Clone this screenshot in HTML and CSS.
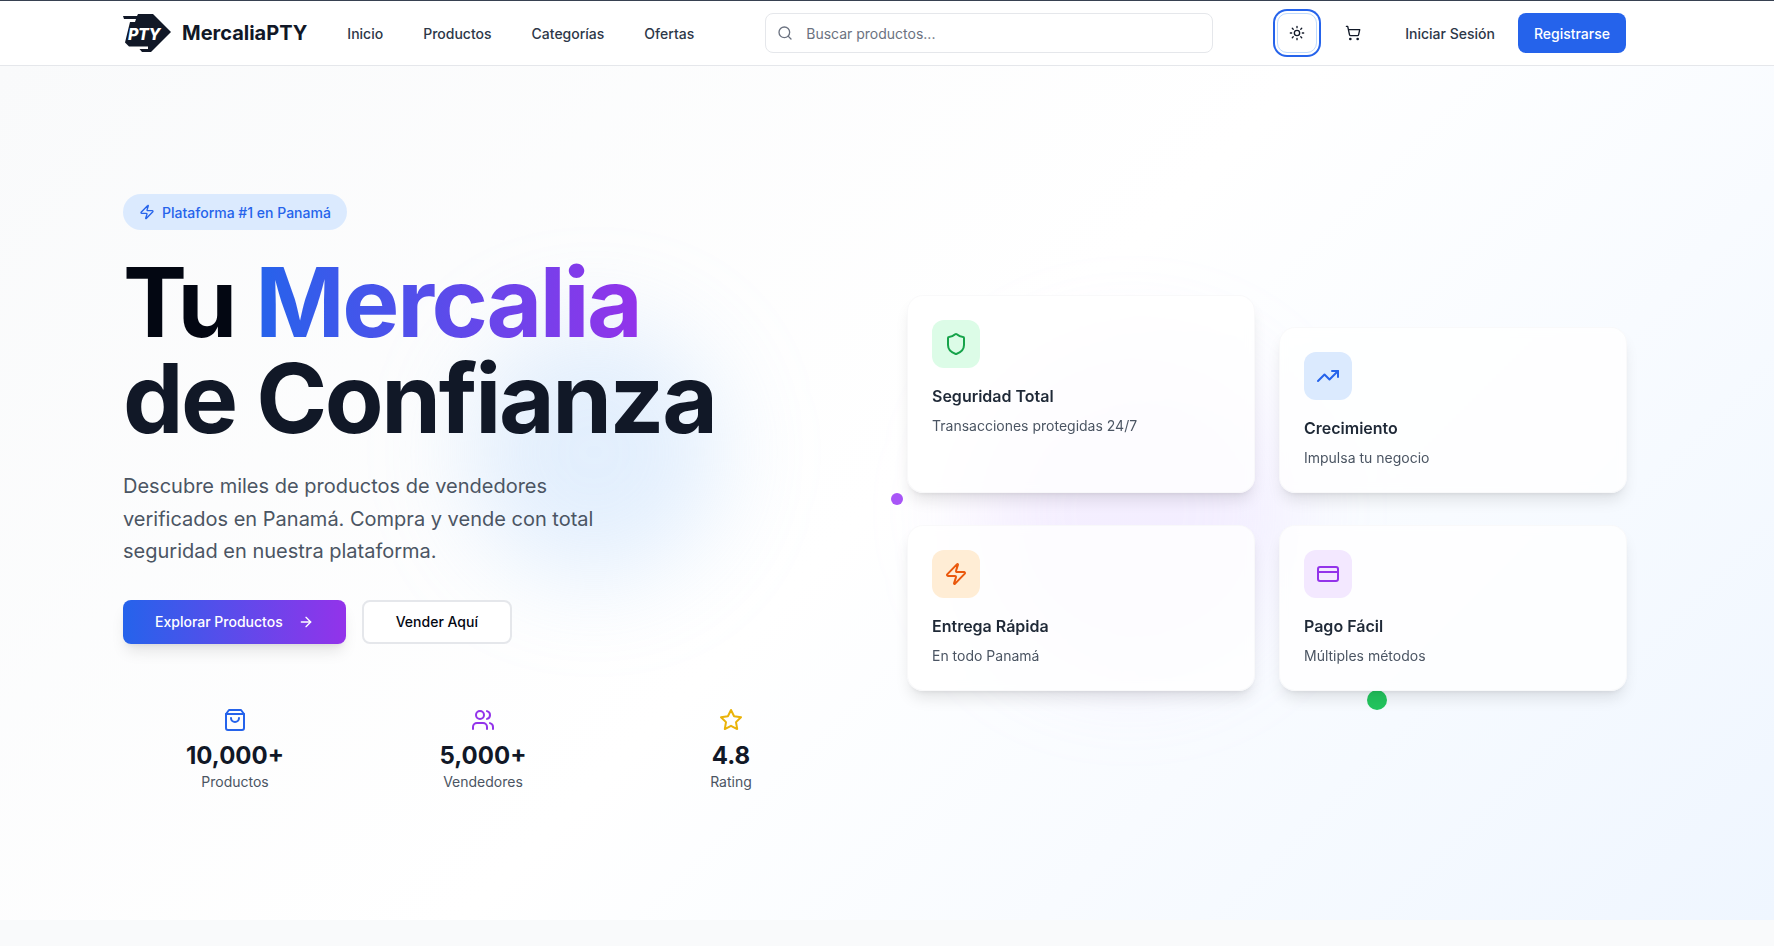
FILE: index.html
```html
<!DOCTYPE html>
<html lang="es">
<head>
  <meta charset="UTF-8">
  <title>MercaliaPTY</title>
  <link rel="stylesheet" href="styles.css">
</head>
<body>
  <svg class="sprite" aria-hidden="true">
    <symbol id="i-zap" viewBox="0 0 24 24"><path d="M4 14a1 1 0 0 1-.78-1.63l9.9-10.2a.5.5 0 0 1 .86.46l-1.92 6.02A1 1 0 0 0 13 10h7a1 1 0 0 1 .78 1.63l-9.9 10.2a.5.5 0 0 1-.86-.46l1.92-6.02A1 1 0 0 0 11 14z"/></symbol>
    <symbol id="i-shield" viewBox="0 0 24 24"><path d="M20 13c0 5-3.5 7.5-7.66 8.95a1 1 0 0 1-.67-.01C7.5 20.5 4 18 4 13V6a1 1 0 0 1 1-1c2 0 4.5-1.2 6.24-2.72a1.17 1.17 0 0 1 1.52 0C14.51 3.81 17 5 19 5a1 1 0 0 1 1 1z"/></symbol>
    <symbol id="i-trend" viewBox="0 0 24 24"><polyline points="22 7 13.5 15.5 8.5 10.5 2 17"/><polyline points="16 7 22 7 22 13"/></symbol>
    <symbol id="i-card" viewBox="0 0 24 24"><rect x="2" y="5" width="20" height="14" rx="2"/><line x1="2" y1="10" x2="22" y2="10"/></symbol>
    <symbol id="i-bag" viewBox="0 0 24 24"><path d="M6 2 3 6v14a2 2 0 0 0 2 2h14a2 2 0 0 0 2-2V6l-3-4Z"/><path d="M3 6h18"/><path d="M16 10a4 4 0 0 1-8 0"/></symbol>
    <symbol id="i-users" viewBox="0 0 24 24"><path d="M16 21v-2a4 4 0 0 0-4-4H6a4 4 0 0 0-4 4v2"/><circle cx="9" cy="7" r="4"/><path d="M22 21v-2a4 4 0 0 0-3-3.87"/><path d="M16 3.13a4 4 0 0 1 0 7.75"/></symbol>
    <symbol id="i-star" viewBox="0 0 24 24"><polygon points="12 2 15.09 8.26 22 9.27 17 14.14 18.18 21.02 12 17.77 5.82 21.02 7 14.14 2 9.27 8.91 8.26 12 2"/></symbol>
    <symbol id="i-sun" viewBox="0 0 24 24"><circle cx="12" cy="12" r="4"/><path d="M12 2v2M12 20v2M4.93 4.93l1.41 1.41M17.66 17.66l1.41 1.41M2 12h2M20 12h2M6.34 17.66l-1.41 1.41M19.07 4.93l-1.41 1.41"/></symbol>
    <symbol id="i-cart" viewBox="0 0 24 24"><circle cx="8" cy="21" r="1"/><circle cx="19" cy="21" r="1"/><path d="M2.05 2.05h2l2.66 12.42a2 2 0 0 0 2 1.58h9.78a2 2 0 0 0 1.95-1.57l1.65-7.43H5.12"/></symbol>
    <symbol id="i-search" viewBox="0 0 24 24"><circle cx="11" cy="11" r="8"/><path d="m21 21-4.3-4.3"/></symbol>
    <symbol id="i-arrow" viewBox="0 0 24 24"><path d="M5 12h14"/><path d="m12 5 7 7-7 7"/></symbol>
  </svg>

  <header class="topbar">
    <a class="brand" href="#">
      <svg class="brand-logo" viewBox="0 0 48 38">
        <path class="logo-body" d="M15 0H30L48 18L28 38H19L16.500 35H25V32.500H6L2 28.500L7 8H12L13 5H1L0 2H14Z"/>
        <text class="logo-text" x="5" y="26">PTY</text>
      </svg>
      <span class="brand-name">MercaliaPTY</span>
    </a>
    <nav class="main-nav">
      <a href="#">Inicio</a>
      <a href="#">Productos</a>
      <a href="#">Categorías</a>
      <a href="#">Ofertas</a>
    </nav>
    <form class="search">
      <svg class="icon search-icon"><use href="#i-search"/></svg>
      <input type="text" placeholder="Buscar productos...">
    </form>
    <div class="actions">
      <button class="icon-btn is-focus" type="button"><svg class="icon"><use href="#i-sun"/></svg></button>
      <button class="icon-btn" type="button"><svg class="icon"><use href="#i-cart"/></svg></button>
      <div class="account">
        <a class="login" href="#">Iniciar Sesión</a>
        <a class="register" href="#">Registrarse</a>
      </div>
    </div>
  </header>

  <main class="hero">
    <div class="blob blob-blue"></div>
    <div class="blob blob-purple"></div>

    <section class="hero-left">
      <div class="badge"><svg class="icon"><use href="#i-zap"/></svg>Plataforma #1 en Panamá</div>
      <h1><span class="h1-first">Tu <span class="grad">Mercalia</span></span><br>de Confianza</h1>
      <p class="lead">Descubre miles de productos de vendedores verificados en Panamá. Compra y vende con total seguridad en nuestra plataforma.</p>
      <div class="cta">
        <a class="btn btn-primary" href="#">Explorar Productos<svg class="icon"><use href="#i-arrow"/></svg></a>
        <a class="btn btn-outline" href="#">Vender Aquí</a>
      </div>
      <div class="stats">
        <div class="stat">
          <svg class="icon-lg c-blue"><use href="#i-bag"/></svg>
          <strong>10,000+</strong>
          <span>Productos</span>
        </div>
        <div class="stat">
          <svg class="icon-lg c-purple"><use href="#i-users"/></svg>
          <strong>5,000+</strong>
          <span>Vendedores</span>
        </div>
        <div class="stat">
          <svg class="icon-lg c-yellow"><use href="#i-star"/></svg>
          <strong>4.8</strong>
          <span>Rating</span>
        </div>
      </div>
    </section>

    <section class="hero-right">
      <span class="dot dot-purple"></span>
      <span class="dot dot-green"></span>
      <article class="card">
        <div class="card-icon bg-green"><svg class="icon-lg c-green"><use href="#i-shield"/></svg></div>
        <h3>Seguridad Total</h3>
        <p>Transacciones protegidas 24/7</p>
      </article>
      <article class="card card-down">
        <div class="card-icon bg-blue"><svg class="icon-lg c-blue"><use href="#i-trend"/></svg></div>
        <h3>Crecimiento</h3>
        <p>Impulsa tu negocio</p>
      </article>
      <article class="card">
        <div class="card-icon bg-orange"><svg class="icon-lg c-orange"><use href="#i-zap"/></svg></div>
        <h3>Entrega Rápida</h3>
        <p>En todo Panamá</p>
      </article>
      <article class="card">
        <div class="card-icon bg-purple"><svg class="icon-lg c-purple"><use href="#i-card"/></svg></div>
        <h3>Pago Fácil</h3>
        <p>Múltiples métodos</p>
      </article>
    </section>
  </main>

  <div class="next-section"></div>
</body>
</html>
```

FILE: styles.css
```css
* {
  box-sizing: border-box;
}
html, body {
  height: 100%;
}
body {
  margin: 0;
  font-family: Inter, "Liberation Sans", sans-serif;
  color: #111827;
  background: #f9fafb;
  overflow: hidden;
}
a {
  color: inherit;
  text-decoration: none;
}
.sprite {
  display: none;
}
.icon, .icon-lg {
  fill: none;
  stroke: currentColor;
  stroke-width: 2;
  stroke-linecap: round;
  stroke-linejoin: round;
  flex: none;
}
.icon {
  width: 16px;
  height: 16px;
}
.icon-lg {
  width: 24px;
  height: 24px;
}
.c-blue { color: #2563eb; }
.c-purple { color: #9333ea; }
.c-yellow { color: #eab308; }
.c-green { color: #16a34a; }
.c-orange { color: #ea580c; }
.bg-green { background: #dcfce7; }
.bg-blue { background: #dbeafe; }
.bg-orange { background: #ffedd5; }
.bg-purple { background: #f3e8ff; }

/* Barra superior */
.topbar {
  display: flex;
  align-items: center;
  height: 66px;
  padding: 0 148px 0 123px;
  background: #fff;
  border-top: 1px solid #374151;
  border-bottom: 1px solid #e5e7eb;
}
.brand {
  display: flex;
  align-items: center;
  gap: 11px;
}
.brand-logo {
  width: 48px;
  height: 38px;
}
.logo-body {
  fill: #111827;
}
.logo-text {
  fill: #fff;
  font-size: 16px;
  font-weight: 800;
  font-style: italic;
  letter-spacing: -0.4px;
}
.brand-name {
  font-size: 20px;
  font-weight: 700;
}
.main-nav {
  display: flex;
  gap: 40px;
  margin-left: 40px;
  font-size: 14px;
  font-weight: 500;
  color: #2d3748;
}
.search {
  position: relative;
  width: 448px;
  margin: 0 64px 0 auto;
}
.search input {
  width: 100%;
  height: 40px;
  padding: 0 12px 0 40px;
  border: 1px solid #e5e7eb;
  border-radius: 8px;
  background: #fff;
  font: inherit;
  font-size: 14px;
}
.search input::placeholder {
  color: #6b7280;
}
.search-icon {
  position: absolute;
  left: 12px;
  top: 12px;
  color: #6b7280;
}
.actions {
  display: flex;
  align-items: center;
  gap: 16px;
}
.icon-btn {
  display: flex;
  align-items: center;
  justify-content: center;
  width: 40px;
  height: 40px;
  padding: 0;
  border: 0;
  border-radius: 8px;
  background: #fff;
  color: #111827;
}
.icon-btn.is-focus {
  border: 1px solid #bfdbfe;
  border-radius: 10px;
  box-shadow: 0 0 0 2px #fff, 0 0 0 4px #2563eb;
}
.account {
  display: flex;
  align-items: center;
  gap: 7px;
  font-size: 14px;
  font-weight: 500;
}
.login {
  padding: 0 16px;
  color: #2d3748;
}
.register {
  display: flex;
  align-items: center;
  height: 40px;
  padding: 0 16px;
  border-radius: 8px;
  background: #2563eb;
  color: #fff;
  font-weight: 500;
}

/* Hero */
.hero {
  position: relative;
  display: grid;
  grid-template-columns: 720px 720px;
  gap: 64px;
  align-items: center;
  height: 854px;
  padding: 0 147px 0 123px;
  overflow: hidden;
  background: linear-gradient(135deg, #f9fafb 0%, #fff 50%, #eff6ff 100%);
}
.blob {
  position: absolute;
  border-radius: 50%;
  filter: blur(48px);
}
.blob-blue {
  left: 466px;
  top: 258px;
  width: 256px;
  height: 256px;
  background: rgba(147, 197, 253, 0.25);
}
.blob-purple {
  left: 970px;
  top: 285px;
  width: 320px;
  height: 320px;
  background: rgba(216, 180, 254, 0.2);
}
.hero-left, .hero-right {
  position: relative;
}
.badge {
  display: inline-flex;
  align-items: center;
  gap: 7px;
  height: 36px;
  padding: 0 16px;
  border-radius: 18px;
  background: #dbeafe;
  color: #2563eb;
  font-size: 14px;
  font-weight: 500;
}
.hero-left h1 {
  margin: 24px 0;
  font-size: 96px;
  line-height: 96px;
  font-weight: 700;
  letter-spacing: -2.4px;
  color: #111827;
}
.h1-first {
  color: #030712;
}
.grad {
  background: linear-gradient(90deg, #2563eb, #9333ea);
  -webkit-background-clip: text;
  background-clip: text;
  color: transparent;
}
.lead {
  max-width: 512px;
  margin: 0 0 32px;
  font-size: 20px;
  line-height: 32.5px;
  color: #4b5563;
}
.cta {
  display: flex;
  gap: 16px;
}
.btn {
  display: inline-flex;
  align-items: center;
  height: 44px;
  border-radius: 8px;
  font-size: 14px;
  font-weight: 500;
}
.btn-primary {
  gap: 15px;
  padding: 0 32px;
  color: #fff;
  background: linear-gradient(90deg, #2563eb, #9333ea);
  box-shadow: 0 10px 15px -3px rgba(0, 0, 0, 0.1), 0 4px 6px -4px rgba(0, 0, 0, 0.1);
}
.btn-outline {
  padding: 0 32px;
  background: #fff;
  border: 2px solid #e5e7eb;
  color: #030712;
}
.stats {
  display: grid;
  grid-template-columns: repeat(3, 1fr);
  gap: 24px;
  margin-top: 64px;
}
.stat {
  display: flex;
  flex-direction: column;
  align-items: center;
}
.stat strong {
  margin-top: 8px;
  font-size: 24px;
  line-height: 32px;
  font-weight: 700;
}
.stat span {
  font-size: 14px;
  line-height: 20px;
  color: #4b5563;
}

/* Tarjetas */
.hero-right {
  display: grid;
  grid-template-columns: 1fr 1fr;
  gap: 32px 24px;
}
.card {
  padding: 24px;
  border: 1px solid rgba(243, 244, 246, 0.5);
  border-radius: 16px;
  background: rgba(255, 255, 255, 0.8);
  backdrop-filter: blur(4px);
  box-shadow: 0 10px 15px -3px rgba(0, 0, 0, 0.1), 0 4px 6px -4px rgba(0, 0, 0, 0.1);
}
.card-down {
  margin-top: 32px;
}
.card-icon {
  display: flex;
  align-items: center;
  justify-content: center;
  width: 48px;
  height: 48px;
  margin-bottom: 16px;
  border-radius: 12px;
}
.card h3 {
  margin: 0 0 8px;
  font-size: 16px;
  line-height: 24px;
  font-weight: 600;
  color: #1f2937;
}
.card p {
  margin: 0;
  font-size: 14px;
  line-height: 20px;
  color: #4b5563;
}
.dot {
  position: absolute;
  border-radius: 50%;
}
.dot-purple {
  left: -16px;
  top: 198px;
  width: 12px;
  height: 12px;
  background: #a855f7;
}
.dot-green {
  left: 460px;
  top: 395px;
  width: 20px;
  height: 20px;
  background: #22c55e;
}
.next-section {
  height: 26px;
  background: #f9fafb;
}
```
